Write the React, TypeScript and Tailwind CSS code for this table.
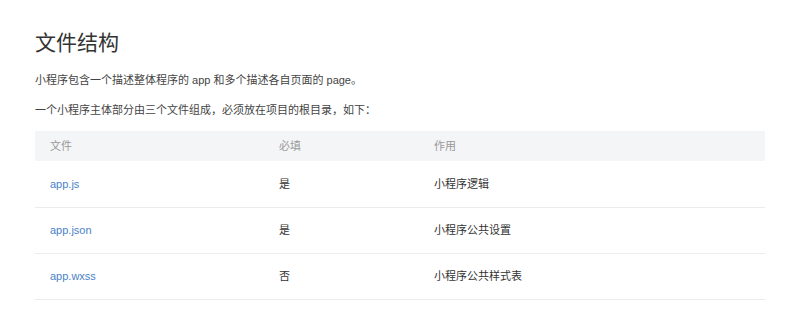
import React from "react";

const rows = [
  { file: "app.js", required: "是", use: "小程序逻辑" },
  { file: "app.json", required: "是", use: "小程序公共设置" },
  { file: "app.wxss", required: "否", use: "小程序公共样式表" },
];

export default function App() {
  return (
    <div
      className="w-[800px] h-[327px] bg-white px-[35px] pt-[28px]"
      style={{ fontFamily: '"Liberation Sans", "Noto Sans CJK SC", sans-serif' }}
    >
      <h1 className="text-[21px] leading-[30px] text-[#333]">文件结构</h1>
      <p className="mt-[12px] text-[11px] leading-[20px] text-[#444]">
        小程序包含一个描述整体程序的 app 和多个描述各自页面的 page。
      </p>
      <p className="mt-[10px] text-[11px] leading-[20px] text-[#444]">
        一个小程序主体部分由三个文件组成，必须放在项目的根目录，如下：
      </p>
      <table className="mt-[11px] w-[730px] border-collapse text-[11px]">
        <thead>
          <tr className="bg-[#f4f5f6] h-[30px] text-[#999]">
            <th className="w-[229px] pl-[15px] text-left font-normal">文件</th>
            <th className="w-[155px] pl-[15px] text-left font-normal">必填</th>
            <th className="pl-[15px] text-left font-normal">作用</th>
          </tr>
        </thead>
        <tbody>
          {rows.map((r) => (
            <tr key={r.file} className="h-[46px] border-b border-[#ececec]">
              <td className="pl-[15px] pt-[1px] text-[#4a82c8]">{r.file}</td>
              <td className="pl-[15px] pt-[1px] text-[#333]">{r.required}</td>
              <td className="pl-[15px] pt-[1px] text-[#333]">{r.use}</td>
            </tr>
          ))}
        </tbody>
      </table>
    </div>
  );
}
